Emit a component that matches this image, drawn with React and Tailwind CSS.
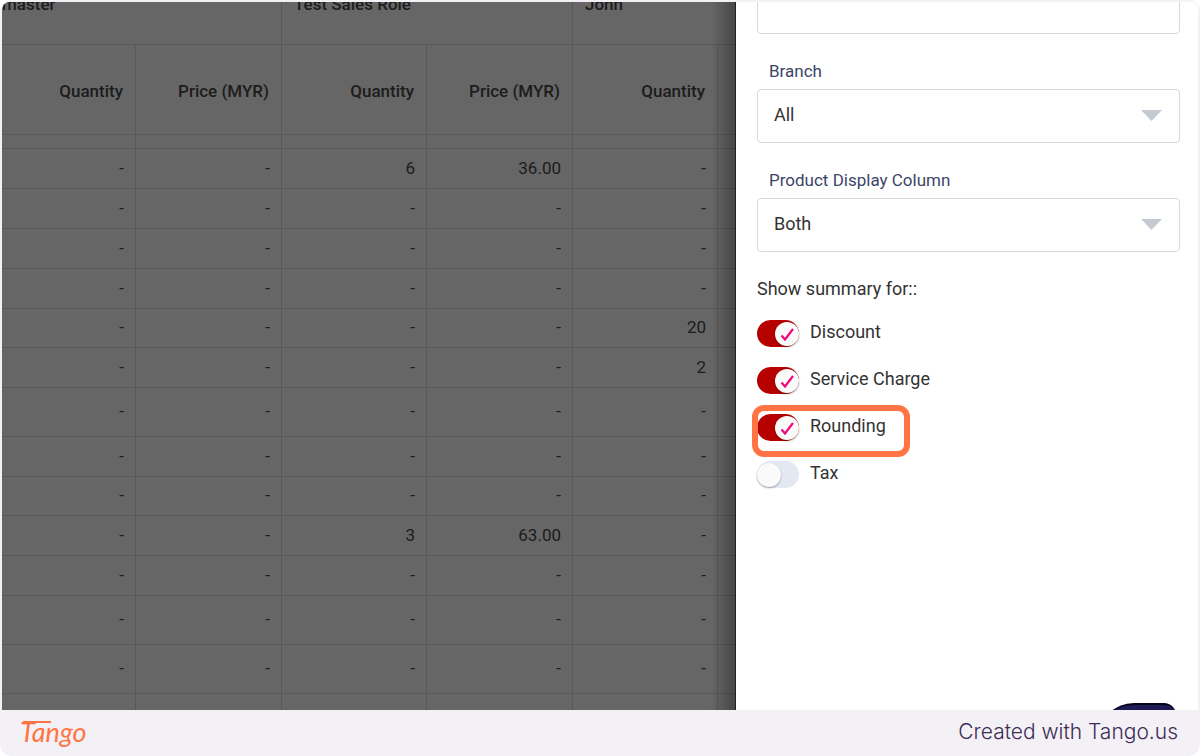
import React, { useState } from 'react';

const salesRows = [
  { height: "h-10", cells: ["-", "-", "6", "36.00", "-"] },
  { height: "h-10", cells: ["-", "-", "-", "-", "-"] },
  { height: "h-10", cells: ["-", "-", "-", "-", "-"] },
  { height: "h-10", cells: ["-", "-", "-", "-", "-"] },
  { height: "h-[39px]", cells: ["-", "-", "-", "-", "20"] },
  { height: "h-10", cells: ["-", "-", "-", "-", "2"] },
  { height: "h-[49px]", cells: ["-", "-", "-", "-", "-"] },
  { height: "h-10", cells: ["-", "-", "-", "-", "-"] },
  { height: "h-[39px]", cells: ["-", "-", "-", "-", "-"] },
  { height: "h-10", cells: ["-", "-", "3", "63.00", "-"] },
  { height: "h-10", cells: ["-", "-", "-", "-", "-"] },
  { height: "h-[49px]", cells: ["-", "-", "-", "-", "-"] },
  { height: "h-[49px]", cells: ["-", "-", "-", "-", "-"] },
  { height: "h-10", cells: ["", "", "", "", ""] },
];

const cellBorder = "border-b border-r border-[#dedede]";

const SalesTable = () => {
  return (
    <table className="-mt-[38px] w-[863px] table-fixed border-separate border-spacing-0 text-[17px] leading-5 text-[#4a4a4a]">
      <colgroup>
        <col className="w-[134px]" />
        <col className="w-[146px]" />
        <col className="w-[145px]" />
        <col className="w-[146px]" />
        <col className="w-[145px]" />
        <col />
      </colgroup>
      <thead>
        <tr className="h-[81px] text-left">
          <th colSpan={2} className={`${cellBorder} font-medium`}>master</th>
          <th colSpan={2} className={`${cellBorder} pl-3 font-medium`}>Test Sales Role</th>
          <th colSpan={2} className={`${cellBorder} pl-3 font-medium`}>John</th>
        </tr>
        <tr className="h-[90px] text-right">
          {["Quantity", "Price (MYR)", "Quantity", "Price (MYR)", "Quantity", ""].map((title, i) => (
            <th key={i} className={`${cellBorder} pr-3 pt-0.5 font-medium`}>{title}</th>
          ))}
        </tr>
      </thead>
      <tbody>
        <tr className="h-[14px]">
          {[0, 1, 2, 3, 4, 5].map((i) => (
            <td key={i} className={cellBorder}></td>
          ))}
        </tr>
        {salesRows.map((row, i) => (
          <tr key={i} className={`${row.height} text-right`}>
            {row.cells.map((value, j) => (
              <td key={j} className={`${cellBorder} pb-0.5 pr-[11px]`}>{value}</td>
            ))}
            <td className={cellBorder}></td>
          </tr>
        ))}
      </tbody>
    </table>
  );
};

const SelectField = ({ id, label, options }) => {
  return (
    <div className="flex flex-col">
      <label htmlFor={id} className="mb-2 pl-3 text-[17px] leading-5 text-[#3b4568]">{label}</label>
      <div className="relative">
        <select
          id={id}
          className="h-[54px] w-full appearance-none rounded border border-[#d9d9d9] bg-white px-4 pb-0.5 text-lg text-[#333]"
        >
          {options.map((option) => (
            <option key={option}>{option}</option>
          ))}
        </select>
        <svg className="pointer-events-none absolute right-[18px] top-[21px] h-[11px] w-[21px]" viewBox="0 0 21 11">
          <path d="M0 0h21L10.500 11z" fill="#c5cad2" />
        </svg>
      </div>
    </div>
  );
};

const Toggle = ({ label, defaultOn, highlighted }) => {
  const [on, setOn] = useState(defaultOn);

  return (
    <label className="relative flex h-[27px] w-fit cursor-pointer items-start gap-[11px]">
      <input
        type="checkbox"
        className="peer sr-only"
        checked={on}
        onChange={(e) => setOn(e.target.checked)}
      />
      <span className={`flex h-[27px] w-[42px] items-center rounded-full ${on ? "justify-end bg-[#b60000]" : "bg-[#e3e8f2]"}`}>
        <span className="flex h-6 w-6 items-center justify-center rounded-full bg-[#fafafa] shadow-[0_1px_2px_rgba(0,0,0,0.35)]">
          {on && (
            <svg className="h-4 w-4" viewBox="0 0 16 16" fill="none" stroke="#f0087f" strokeWidth="2.2">
              <path d="M2.500 9.500l3.500 4L14 3" />
            </svg>
          )}
        </span>
      </span>
      <span className="text-lg leading-6 text-[#333]">{label}</span>
      {highlighted && (
        <span className="absolute -left-[5px] -right-6 -top-[9px] h-[52px] rounded-xl border-6 border-[#ff7442]"></span>
      )}
    </label>
  );
};

const FilterDrawer = () => {
  return (
    <aside className="relative z-10 flex w-[463px] shrink-0 flex-col overflow-hidden border-l border-[#222] bg-white pl-[21px] pr-[18px]">
      <input
        type="text"
        aria-label="Search"
        className="-mt-5 h-[52px] w-full shrink-0 rounded border border-[#d9d9d9]"
      />
      <div className="mt-[27px] flex flex-col gap-[27px]">
        <SelectField id="branch" label="Branch" options={["All"]} />
        <SelectField id="display-column" label="Product Display Column" options={["Both", "Code", "Name"]} />
      </div>
      <p className="mt-[25px] text-lg leading-6 text-[#333]">Show summary for::</p>
      <div className="mt-[19px] flex flex-col gap-5">
        <Toggle label="Discount" defaultOn={true} />
        <Toggle label="Service Charge" defaultOn={true} />
        <Toggle label="Rounding" defaultOn={true} highlighted />
        <Toggle label="Tax" defaultOn={false} />
      </div>
      <button
        aria-label="Apply"
        className="-mb-[47px] mr-1 mt-auto h-[54px] w-[78px] shrink-0 self-end rounded-xl rounded-tl-[36px] border-t-2 border-[#07061f] bg-[#1f1b57]"
      ></button>
    </aside>
  );
};

const Footer = () => {
  return (
    <footer className="flex h-11 shrink-0 items-center justify-between pl-[18px] pr-5">
      <a href="#" className="relative font-[Lato] text-[27px] italic leading-8 text-[#ff7442]">
        Tango
        <svg className="absolute left-0 top-[4px] h-1 w-8" viewBox="0 0 32 4" fill="none" stroke="#ff7442" strokeWidth="2">
          <path d="M3 2h28" />
        </svg>
      </a>
      <p className="font-[Inter] text-[21px] font-light leading-8 text-[#3e2c55]">Created with Tango.us</p>
    </footer>
  );
};

const App = () => {
  return (
    <div className="h-screen bg-white font-[Roboto,sans-serif]">
      <div className="flex h-full flex-col rounded-xl bg-[#f3f1f6] p-0.5">
        <main className="flex min-h-0 flex-1 overflow-hidden rounded-t-lg bg-white">
          <section className="relative min-w-0 flex-1 overflow-hidden">
            <SalesTable />
            <div className="absolute inset-0 bg-black/60"></div>
            <div className="absolute inset-y-0 right-0 w-6 bg-linear-to-l from-black/30 to-transparent"></div>
          </section>
          <FilterDrawer />
        </main>
        <Footer />
      </div>
    </div>
  );
};

export default App;
